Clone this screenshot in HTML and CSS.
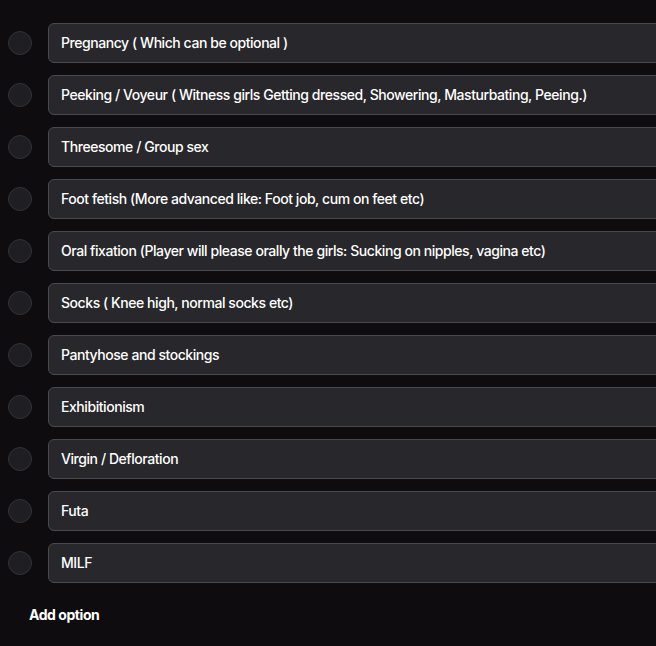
FILE: index.html
```html
<!DOCTYPE html>
<html>
<head>
<meta charset="utf-8">
<link rel="stylesheet" href="styles.css">
</head>
<body>
<div class="list">
  <div class="row"><span class="radio"></span><div class="field">Pregnancy ( Which can be optional )</div></div>
  <div class="row"><span class="radio"></span><div class="field">Peeking / Voyeur ( Witness girls Getting dressed, Showering, Masturbating, Peeing.)</div></div>
  <div class="row"><span class="radio"></span><div class="field">Threesome / Group sex</div></div>
  <div class="row"><span class="radio"></span><div class="field">Foot fetish (More advanced like: Foot job, cum on feet etc)</div></div>
  <div class="row"><span class="radio"></span><div class="field">Oral fixation (Player will please orally the girls: Sucking on nipples, vagina etc)</div></div>
  <div class="row"><span class="radio"></span><div class="field">Socks ( Knee high, normal socks etc)</div></div>
  <div class="row"><span class="radio"></span><div class="field">Pantyhose and stockings</div></div>
  <div class="row"><span class="radio"></span><div class="field">Exhibitionism</div></div>
  <div class="row"><span class="radio"></span><div class="field">Virgin / Defloration</div></div>
  <div class="row"><span class="radio"></span><div class="field">Futa</div></div>
  <div class="row"><span class="radio"></span><div class="field">MILF</div></div>
</div>
<div class="add">Add option</div>
</body>
</html>
```
FILE: styles.css
```css
html, body {
  margin: 0;
  padding: 0;
  background: #0e0c0f;
  overflow: hidden;
}
body {
  font-family: Inter, "Noto Sans", sans-serif;
  color: #ffffff;
  font-size: 14px;
  letter-spacing: -0.44px;
  padding-top: 23px;
}
.list {
  display: flex;
  flex-direction: column;
  gap: 12px;
  width: 720px;
}
.row {
  display: flex;
  align-items: center;
  gap: 16px;
  padding-left: 8px;
}
.radio {
  width: 22px;
  height: 22px;
  border-radius: 50%;
  border: 1px solid #333236;
  background: #1f1e22;
  flex: none;
}
.field {
  flex: 1;
  height: 36px;
  box-sizing: content-box;
  display: flex;
  align-items: center;
  padding: 0 0 2px 12px;
  border: 1px solid #4a494e;
  border-radius: 6px;
  background: #28272b;
  white-space: nowrap;
  font-weight: 500;
}
.add {
  padding: 23px 0 0 29px;
  font-weight: 700;
  font-size: 14px;
}
```
